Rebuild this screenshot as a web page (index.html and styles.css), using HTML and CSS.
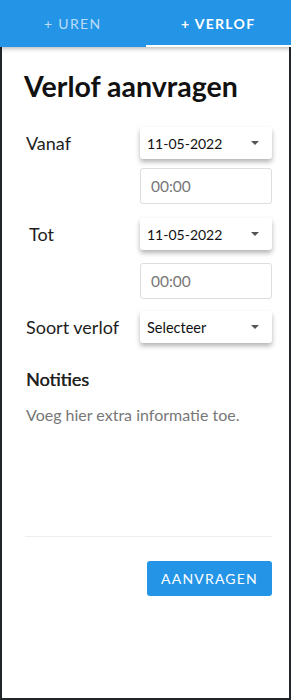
FILE: index.html
```html
<!DOCTYPE html>
<html lang="nl">
<head>
  <meta charset="UTF-8">
  <meta name="viewport" content="width=device-width, initial-scale=1.0">
  <title>Verlof aanvragen</title>
  <link rel="stylesheet" href="styles.css">
</head>
<body>
  <!-- Tabs -->
  <header class="tabs">
    <div class="tab">+ UREN</div>
    <div class="tab active">+ VERLOF</div>
  </header>

  <main class="page">
    <h1>Verlof aanvragen</h1>

    <div class="row row-vanaf">
      <label class="label">Vanaf</label>
      <div class="select"><span>11-05-2022</span><i class="caret"></i></div>
    </div>
    <div class="row row-time">
      <span></span>
      <div class="time">00:00</div>
    </div>

    <div class="row row-tot">
      <label class="label label-indent">Tot</label>
      <div class="select"><span>11-05-2022</span><i class="caret"></i></div>
    </div>
    <div class="row row-time2">
      <span></span>
      <div class="time">00:00</div>
    </div>

    <div class="row row-soort">
      <label class="label">Soort verlof</label>
      <div class="select small"><span>Selecteer</span><i class="caret"></i></div>
    </div>

    <h2>Notities</h2>
    <div class="notes">Voeg hier extra informatie toe.</div>

    <hr class="divider">

    <div class="actions">
      <button type="button">AANVRAGEN</button>
    </div>
  </main>
</body>
</html>
```

FILE: styles.css
```css
html, body {
  height: 100%;
}
body {
  margin: 0;
  padding: 0;
  font-family: Lato, "Open Sans", sans-serif;
  color: #1e1e1e;
  background: #fff;
  display: flex;
  flex-direction: column;
}
.tabs {
  display: flex;
  height: 47px;
  flex-shrink: 0;
  background-color: #2494e7;
  position: relative;
  z-index: 1;
  box-shadow: 0 2px 4px rgba(0, 0, 0, 0.25);
}
.tab {
  flex: 1;
  display: flex;
  align-items: center;
  justify-content: center;
  color: rgba(255, 255, 255, 0.7);
  font-size: 14px;
  letter-spacing: 1.3px;
  border-bottom: 2px solid transparent;
  padding-top: 2px;
}
.tab.active {
  color: #fff;
  font-weight: bold;
  border-bottom-color: #fff;
}
.page {
  flex: 1;
  border: 2px solid #22262a;
  border-top: 0;
  padding: 0 17px 0 22px;
}
h1 {
  margin: 24px 0 0 0;
  font-size: 28.5px;
  font-weight: bold;
  color: #111;
  line-height: 30px;
}
.row {
  display: grid;
  grid-template-columns: 116px 132px;
  align-items: center;
}
.row-vanaf {
  margin-top: 26px;
}
.row-time {
  margin-top: 9px;
}
.row-tot {
  margin-top: 14px;
}
.row-time2 {
  margin-top: 13px;
}
.row-soort {
  margin-top: 12px;
}
.label {
  font-size: 18px;
  padding-left: 2px;
}
.label-indent {
  padding-left: 5px;
}
.select {
  height: 32px;
  display: flex;
  align-items: center;
  justify-content: space-between;
  padding: 0 13px 0 7px;
  background: #fff;
  border-radius: 3px;
  box-shadow: 0 3px 5px rgba(0, 0, 0, 0.3);
  font-size: 14px;
  color: #111;
}
.select.small {
  font-size: 14.5px;
}
.caret {
  width: 0;
  height: 0;
  border-left: 4.5px solid transparent;
  border-right: 4.5px solid transparent;
  border-top: 4.5px solid #555;
}
.time {
  height: 36px;
  box-sizing: border-box;
  border: 1px solid #ddd;
  border-radius: 3px;
  display: flex;
  align-items: center;
  padding: 0 10px;
  font-size: 15.5px;
  color: #777;
}
h2 {
  margin: 25px 0 0 2px;
  font-size: 18px;
  line-height: 22px;
  font-weight: normal;
  color: #222;
  text-shadow: 0.3px 0 0 #222;
}
.notes {
  margin: 15px 0 0 2px;
  font-size: 16px;
  line-height: 20px;
  color: #777;
}
.divider {
  margin: 111px 0 0 1px;
  width: 247px;
  border: 0;
  border-top: 1px solid #eee;
}
.actions {
  display: flex;
  justify-content: flex-end;
  margin-top: 24px;
  width: 248px;
}
button {
  width: 125px;
  height: 35px;
  border: 0;
  border-radius: 3px;
  background-color: #2494e7;
  color: #fff;
  font-family: Lato, "Open Sans", sans-serif;
  font-size: 14px;
  letter-spacing: 1.2px;
  cursor: pointer;
}
```
